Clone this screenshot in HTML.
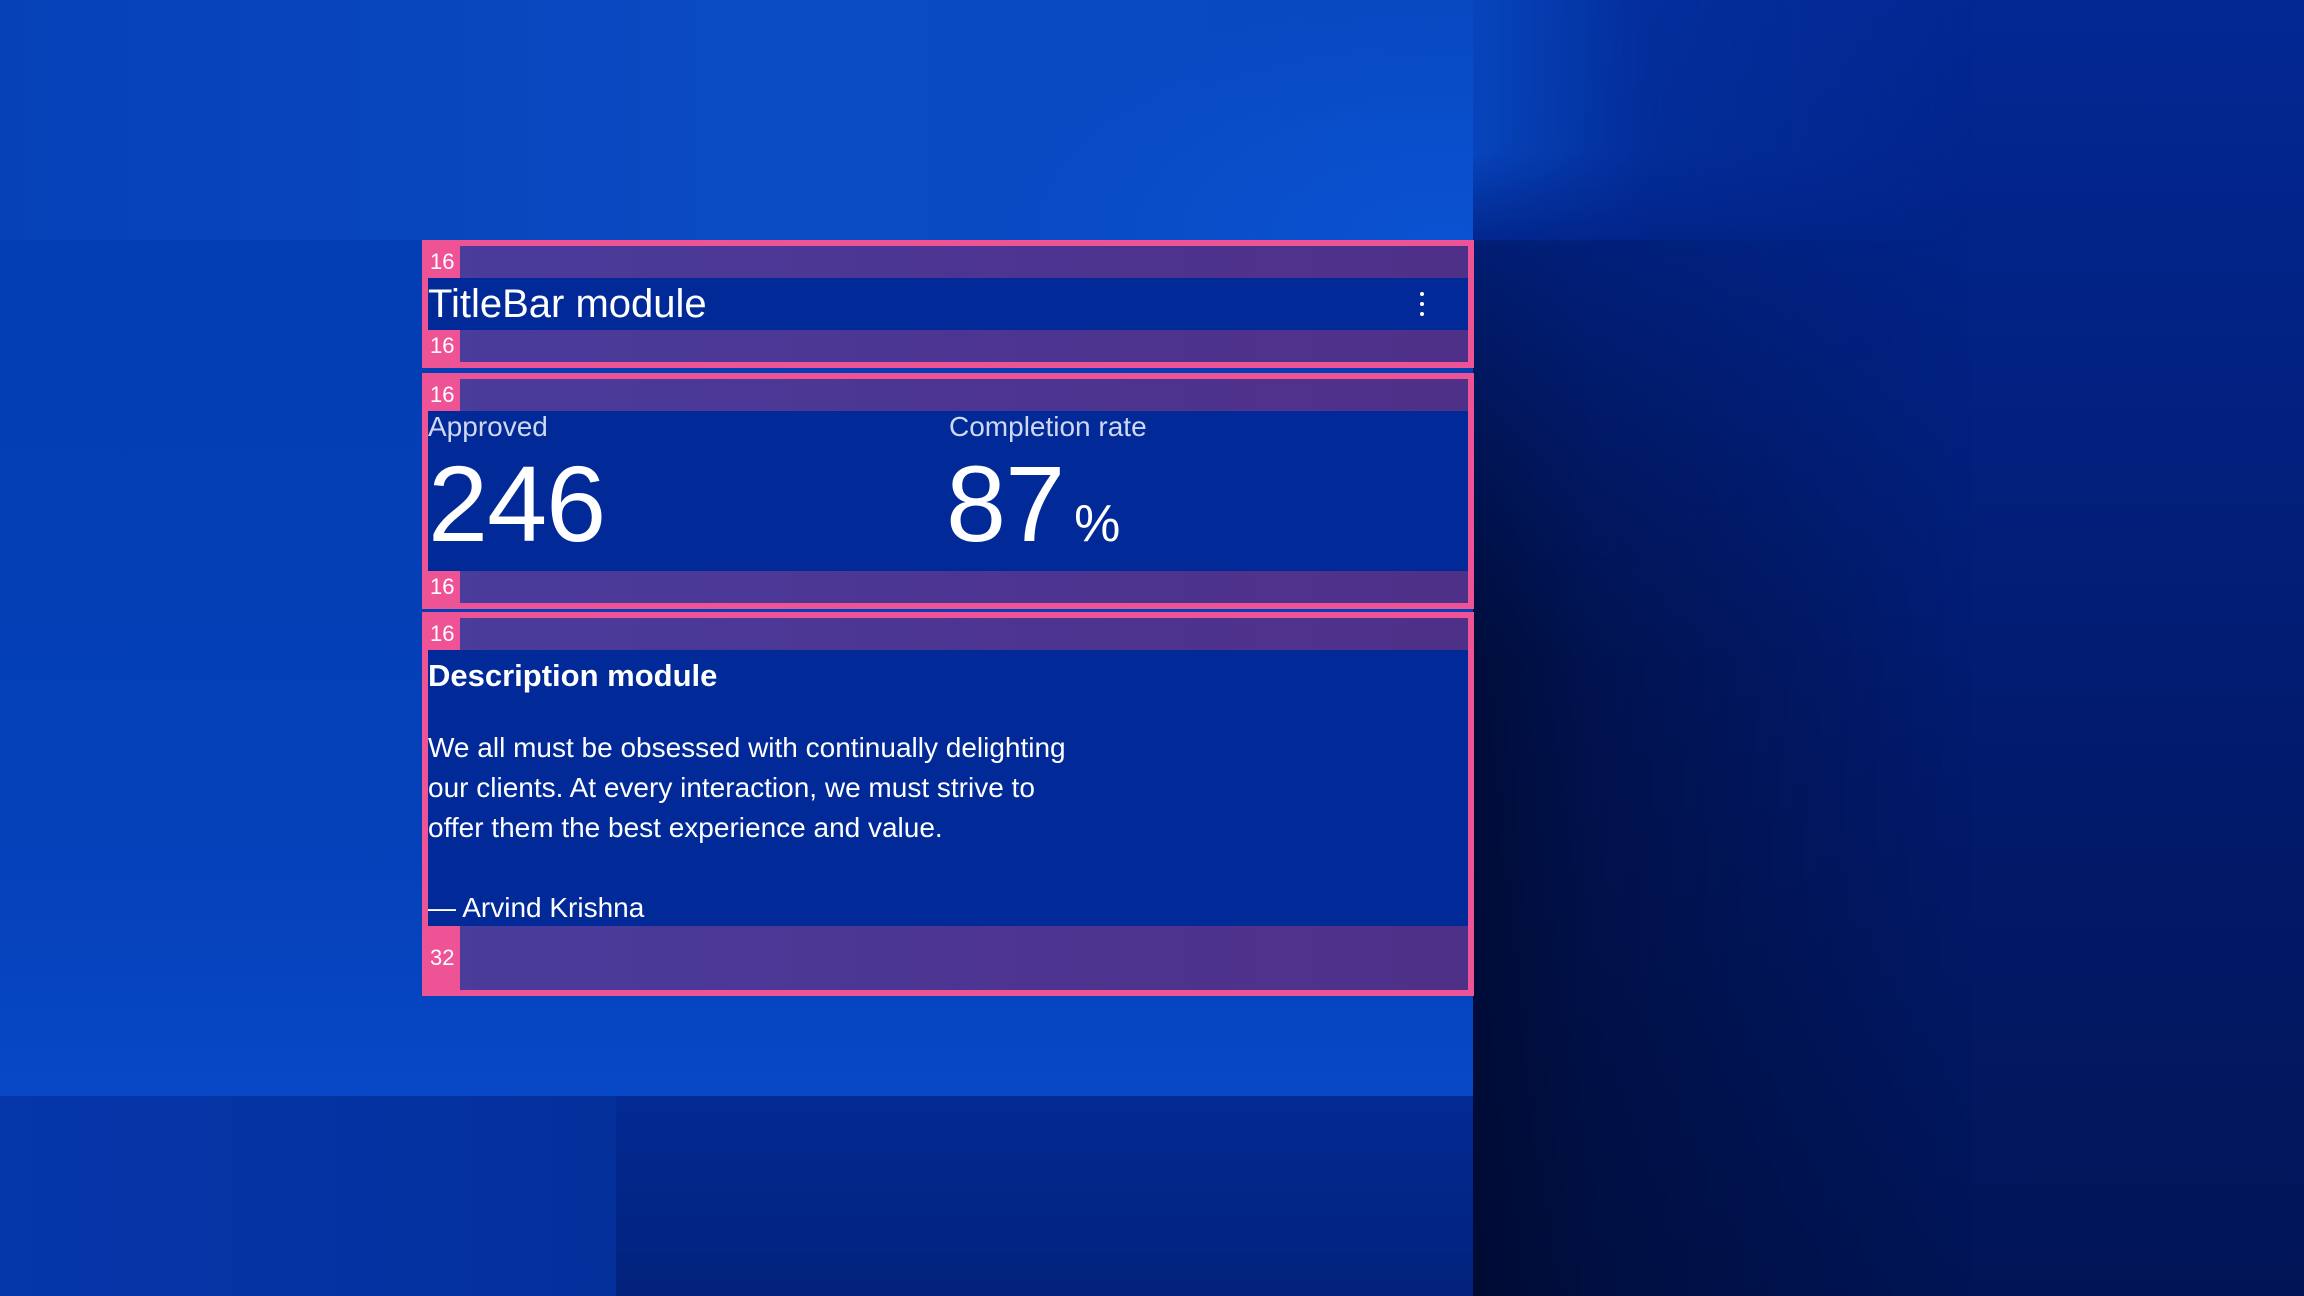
<!DOCTYPE html>
<html><head><meta charset="utf-8"><style>
*{margin:0;padding:0;box-sizing:border-box}
body{width:2304px;height:1296px;overflow:hidden;position:relative;font-family:"Liberation Sans",sans-serif;color:#fff;background:#0441b8}
.top{position:absolute;left:0;top:0;width:1473px;height:240px;background:radial-gradient(ellipse 500px 260px at 1440px 240px,#0a52d2,rgba(10,76,196,0) 100%),linear-gradient(90deg,#0641b8,#0a4ac2 50%,#0848c0 100%)}
.left{position:absolute;left:0;top:240px;width:1473px;height:856px;background:linear-gradient(180deg,#043eb4,#0440b8 70%,#0848c6)}
.right{position:absolute;left:1473px;top:0;width:831px;height:1296px;background:linear-gradient(180deg,#032894 0%,#022284 25%,#021a6c 60%,#011556 100%)}
.tr{position:absolute;left:1473px;top:0;width:500px;height:250px;background:linear-gradient(90deg,#0745bc,rgba(4,50,160,0.6) 35%,rgba(3,40,148,0) 100%);-webkit-mask-image:linear-gradient(180deg,#000 60%,rgba(0,0,0,0) 100%)}
.shadow{position:absolute;left:1473px;top:240px;width:500px;height:1056px;background:linear-gradient(90deg,rgba(0,8,40,0.75),rgba(0,8,40,0.45) 25%,rgba(0,8,40,0) 100%);-webkit-mask-image:linear-gradient(180deg,rgba(0,0,0,.3),#000 40%)}
.bl{position:absolute;left:0;top:1096px;width:616px;height:200px;background:linear-gradient(90deg,#0536aa,#04309c)}
.bm{position:absolute;left:616px;top:1096px;width:857px;height:200px;background:linear-gradient(180deg,#032a94,#02227c)}
.box{position:absolute;left:422px;width:1052px;border:6px solid #ee5396;background:#012a98}
.pad{position:relative;height:32px;background:linear-gradient(90deg,#4a3c9c,#4d3490 60%,#4e3088)}
.pad span{position:absolute;left:0;top:0;width:32px;height:100%;background:#ee5396;font-size:22px;line-height:32px;padding-left:2px;color:#fff}
.title{height:52px;font-size:40px;line-height:52px;position:relative}
.dot{position:absolute;left:992px;width:4px;height:4px;border-radius:50%;background:#fff}
.lbl{position:absolute;font-size:28px;color:#d0d8f0;top:0}
.num{position:absolute;font-size:108px;top:30px;font-weight:300;letter-spacing:-1px}
</style></head><body>
<div class="top"></div><div class="left"></div><div class="right"></div><div class="tr"></div><div class="shadow"></div><div class="bl"></div><div class="bm"></div>

<div class="box" style="top:240px;height:128px">
 <div class="pad"><span>16</span></div>
 <div class="title">TitleBar module
  <div class="dot" style="top:14px"></div><div class="dot" style="top:24px"></div><div class="dot" style="top:34px"></div></div>
 <div class="pad"><span>16</span></div>
</div>

<div class="box" style="top:373px;height:236px">
 <div class="pad"><span>16</span></div>
 <div style="height:160px;position:relative">
  <div class="lbl" style="left:0">Approved</div>
  <div class="num" style="left:0">246</div>
  <div class="lbl" style="left:521px">Completion rate</div>
  <div class="num" style="left:518px">87<span style="font-size:52px;margin-left:10px">%</span></div>
 </div>
 <div class="pad"><span>16</span></div>
</div>

<div class="box" style="top:612px;height:384px">
 <div class="pad"><span>16</span></div>
 <div style="height:276px;position:relative">
  <div style="font-size:31px;font-weight:bold;position:absolute;top:8px">Description module</div>
  <div style="position:absolute;top:78px;font-size:28px;line-height:40px;width:760px">We all must be obsessed with continually delighting<br>our clients. At every interaction, we must strive to<br>offer them the best experience and value.</div>
  <div style="position:absolute;top:238px;font-size:28px;line-height:40px">— Arvind Krishna</div>
 </div>
 <div class="pad" style="height:64px"><span style="line-height:64px">32</span></div>
</div>
</body></html>
